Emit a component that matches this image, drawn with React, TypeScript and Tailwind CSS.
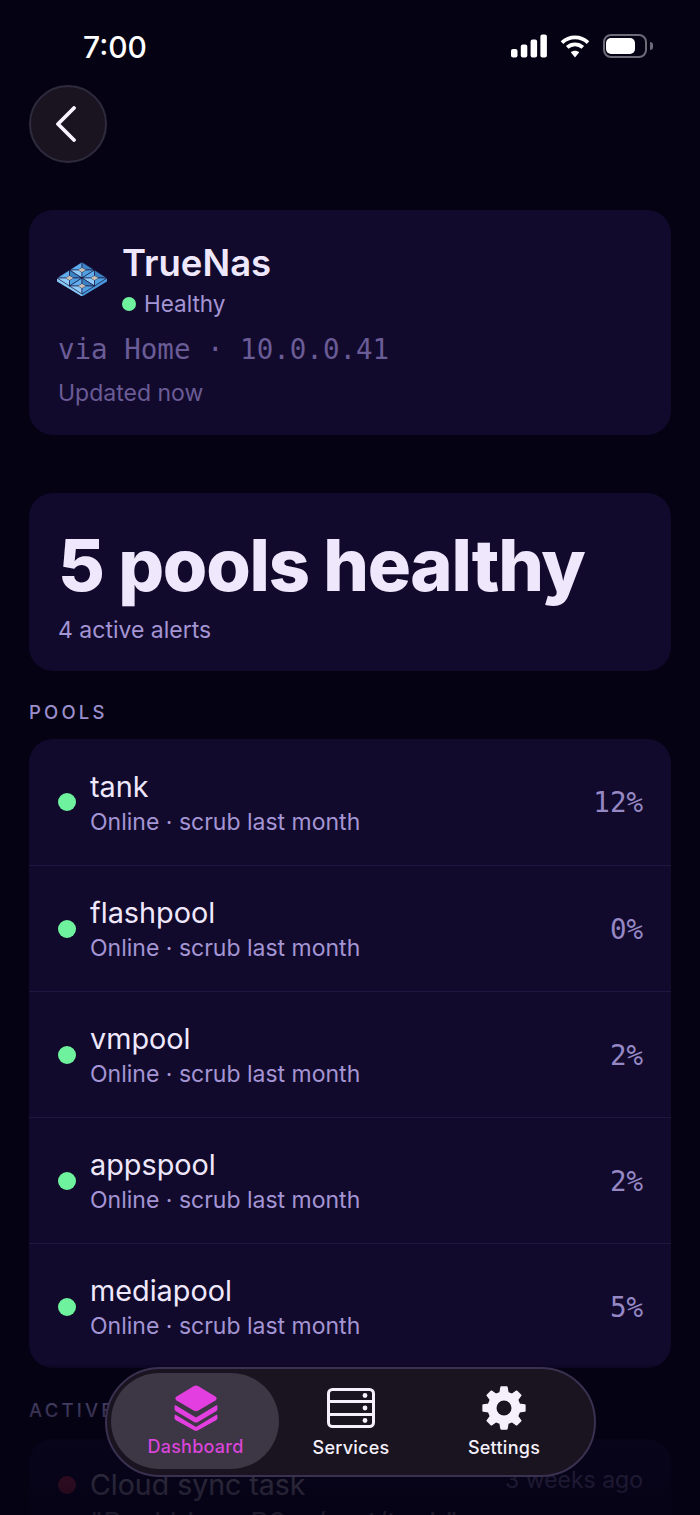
import { Fragment } from "react";

const POOLS = [
  { name: "tank", usage: "12%" },
  { name: "flashpool", usage: "0%" },
  { name: "vmpool", usage: "2%" },
  { name: "appspool", usage: "2%" },
  { name: "mediapool", usage: "5%" },
];

const MONO = "font-['DejaVu_Sans_Mono',monospace]";

function gearPath(cx: number, cy: number, outer: number, inner: number, teeth: number): string {
  const pts: string[] = [];
  const step = (Math.PI * 2) / teeth;
  for (let i = 0; i < teeth; i++) {
    const a = i * step - Math.PI / 2;
    const spots: [number, number][] = [
      [a - step * 0.3, inner],
      [a - step * 0.17, outer],
      [a + step * 0.17, outer],
      [a + step * 0.3, inner],
    ];
    spots.forEach(([t, r]) => pts.push(`${(cx + Math.cos(t) * r).toFixed(2)} ${(cy + Math.sin(t) * r).toFixed(2)}`));
  }
  return `M${pts.join("L")}Z`;
}

function StatusIcons() {
  return (
    <div className="flex items-center gap-[13px]">
      <svg width="36" height="24" viewBox="0 0 36 24" fill="#fff">
        <rect x="0" y="15" width="6.5" height="8.5" rx="2" />
        <rect x="9.8" y="10.5" width="6.5" height="13" rx="2" />
        <rect x="19.6" y="5.5" width="6.5" height="18" rx="2" />
        <rect x="29.4" y="0.5" width="6.5" height="23" rx="2" />
      </svg>
      <svg width="30" height="24" viewBox="0 0 30 24" fill="none" stroke="#fff" strokeWidth="3.8">
        <path d="M2 8.6C9.4 1.7 20.6 1.7 28 8.6" />
        <path d="M7.2 13.4C11.8 9.4 18.2 9.4 22.8 13.4" />
        <path d="M15 23.4L10.8 18.2C13.2 16.2 16.8 16.2 19.2 18.2Z" fill="#fff" stroke="none" />
      </svg>
      <div className="flex items-center gap-[3px]">
        <div className="flex h-[24px] w-[44px] items-center rounded-[8px] border-2 border-[#6f6a78] p-[1px]">
          <div className="h-[16px] w-[29px] rounded-[5px] bg-white" />
        </div>
        <div className="h-[8px] w-[3px] rounded-r-full bg-[#6f6a78]" />
      </div>
    </div>
  );
}

function NasLogo() {
  // 2x2 isometric tile grid, each tile is a gray core with four blue bricks
  const cells = [
    [26, 10],
    [13.5, 18],
    [38.5, 18],
    [26, 26],
  ];
  const hw = 12.5;
  const hh = 8;
  const iw = 3.8;
  const ih = 2.2;
  return (
    <svg width="52" height="36" viewBox="0 0 52 36" className="ml-[-2px] mt-[19px] shrink-0">
      <path d="M1 18L26 34V36.5L1 21.6Z" fill="#86c6f7" />
      <path d="M51 18L26 34V36.5L51 21.6Z" fill="#4a98dd" />
      {cells.map(([x, y]) => (
        <Fragment key={`${x}-${y}`}>
          <g stroke="#120a2c" strokeWidth="0.55">
            <path d={`M${x - hw} ${y}L${x} ${y - hh}L${x} ${y - ih}L${x - iw} ${y}Z`} fill="#5fadec" />
            <path d={`M${x + hw} ${y}L${x} ${y - hh}L${x} ${y - ih}L${x + iw} ${y}Z`} fill="#3b82c4" />
            <path d={`M${x - hw} ${y}L${x} ${y + hh}L${x} ${y + ih}L${x - iw} ${y}Z`} fill="#8fcaf8" />
            <path d={`M${x + hw} ${y}L${x} ${y + hh}L${x} ${y + ih}L${x + iw} ${y}Z`} fill="#4f9fe2" />
          </g>
          <path d={`M${x - iw} ${y}L${x} ${y - ih}L${x + iw} ${y}L${x} ${y + ih}Z`} fill="#c4c0b8" />
        </Fragment>
      ))}
    </svg>
  );
}

function TabBar() {
  const label = "text-[18px] font-medium leading-[22px] tracking-[0.25px]";
  return (
    <div className="absolute left-[105px] top-[1367px] flex h-[110px] w-[491px] items-start rounded-[55px] border-2 border-[#3a3050] bg-[#19141f] pl-[4px] pt-[4px]">
      <div className="flex h-[96px] w-[168px] flex-col items-center rounded-[48px] bg-[#3d3645] pl-[1px] pt-[12px]">
        <svg width="44" height="46" viewBox="0 0 44 46" fill="#e33fe0">
          <path d="M19.6 1.2C21 0.4 23 0.4 24.4 1.2L41.4 11.6C43.2 12.8 43.2 14.2 41.4 15.4L24.4 25.6C23 26.4 21 26.4 19.6 25.6L2.6 15.4C0.8 14.2 0.8 12.8 2.6 11.6Z" />
          <path d="M2 20.5L22 32.6L42 20.5C43 20 43.4 20.6 43.4 21.6V24C43.4 25 43 25.6 42 26.2L24 37C22.6 37.8 21.4 37.8 20 37L2 26.2C1 25.6 0.6 25 0.6 24V21.6C0.6 20.6 1 20 2 20.5Z" />
          <path d="M2 30L22 42L42 30C43 29.5 43.4 30 43.4 31V33C43.4 34 43 34.6 42 35.2L24 45.2C22.6 46 21.4 46 20 45.2L2 35.2C1 34.6 0.6 34 0.6 33V31C0.6 30 1 29.5 2 30Z" />
        </svg>
        <span className={`mt-[5px] ${label} text-[#d945d8]`}>Dashboard</span>
      </div>
      <div className="ml-[15px] flex w-[114px] flex-col items-center pt-[15px]">
        <svg width="48" height="40" viewBox="0 0 48 40" fill="none">
          <rect x="1.5" y="1.5" width="45" height="37" rx="4" stroke="#f5f0fb" strokeWidth="3" />
          <path d="M1.5 13.5H46.5M1.5 26.5H46.5" stroke="#f5f0fb" strokeWidth="3" />
          <circle cx="38" cy="7.5" r="2.4" fill="#f5f0fb" />
          <circle cx="38" cy="20" r="2.4" fill="#f5f0fb" />
          <circle cx="38" cy="32.5" r="2.4" fill="#f5f0fb" />
        </svg>
        <span className={`mt-[9px] ${label} text-[#f5f0fb]`}>Services</span>
      </div>
      <div className="ml-[39px] flex w-[114px] flex-col items-center pt-[13px]">
        <svg width="44" height="44" viewBox="0 0 44 44">
          <path d={gearPath(22, 22, 22, 16.5, 8)} fill="#f5f0fb" stroke="#f5f0fb" strokeWidth="2" strokeLinejoin="round" transform="translate(1.1 1.1) scale(0.95)" />
          <circle cx="22" cy="22" r="7.5" fill="#19141f" />
        </svg>
        <span className={`mt-[7px] ${label} text-[#f5f0fb]`}>Settings</span>
      </div>
    </div>
  );
}

export default function App() {
  return (
    <div className="relative h-[1515px] w-[700px] overflow-hidden bg-[#050214] font-['Inter',sans-serif]">
      <div className="flex h-[85px] items-start justify-between pl-[83px] pr-[47px] pt-[27px]">
        <span className="text-[30px] font-medium leading-[40px] text-white">7:00</span>
        <div className="pt-[7px]">
          <StatusIcons />
        </div>
      </div>

      <div className="px-[29px]">
        <button className="flex h-[78px] w-[78px] items-center justify-center rounded-full border-2 border-[#2f2a3d] bg-[#19141f]">
          <svg width="24" height="36" viewBox="0 0 24 36" fill="none" stroke="#f8f4ff" strokeWidth="3.8" strokeLinecap="round" strokeLinejoin="round" className="ml-[-4px]">
            <path d="M20 2L4 18L20 34" />
          </svg>
        </button>

        <section className="mt-[47px] h-[225px] rounded-[24px] bg-[#120a2c] px-[29px] pt-[31px]">
          <div className="flex items-start gap-[14px]">
            <NasLogo />
            <div>
              <h1 className="text-[36.5px] font-semibold leading-[44px] text-[#efe8fd]">TrueNas</h1>
              <div className="mt-[4px] flex items-center gap-[8px]">
                <span className="h-[14px] w-[14px] rounded-full bg-[#6ff29d]" />
                <span className="text-[22.5px] leading-[30px] text-[#a495d4]">Healthy</span>
              </div>
            </div>
          </div>
          <div className={`mt-[14px] text-[27.5px] leading-[32px] text-[#6a5c96] ${MONO}`}>via Home · 10.0.0.41</div>
          <div className="mt-[14px] text-[23px] leading-[28px] text-[#6a5c96]">Updated now</div>
        </section>

        <section className="mt-[58px] h-[178px] rounded-[24px] bg-[#120a2c] px-[29px] pt-[30px]">
          <h2 className="text-[72px] font-extrabold leading-[84px] tracking-[-1.25px] text-[#efe8fd]">5 pools healthy</h2>
          <p className="mt-[9px] text-[23px] leading-[28px] text-[#a495d4]">4 active alerts</p>
        </section>

        <h3 className="mt-[29px] text-[18.5px] font-medium leading-[24px] tracking-[3.2px] text-[#9a8ecb]">POOLS</h3>

        <section className="mt-[15px] h-[629px] overflow-hidden rounded-[24px] bg-[#120a2c]">
          {POOLS.map((pool, i) => (
            <div key={pool.name} className={`flex h-[126px] items-center pl-[29px] pr-[28px] ${i > 0 ? "border-t border-[#1f1740]" : ""}`}>
              <span className="h-[18px] w-[18px] rounded-full bg-[#6ff29d]" />
              <div className="ml-[14px] mt-[1px] flex-1">
                <div className="text-[28.8px] leading-[36px] text-[#efe8fd]">{pool.name}</div>
                <div className="mt-[2px] text-[23px] leading-[30px] text-[#a495d4]">Online · scrub last month</div>
              </div>
              <span className={`mt-[2px] text-[27.5px] text-[#9588c4] ${MONO}`}>{pool.usage}</span>
            </div>
          ))}
        </section>

        <h3 className="mt-[30px] text-[18.5px] font-medium leading-[24px] tracking-[3.2px] text-[#9a8ecb]">ACTIVE ALERTS</h3>

        <section className="mt-[17px] h-[200px] rounded-[24px] bg-[#120a2c] pl-[29px] pr-[28px] pt-[28px]">
          <div className="flex items-center">
            <span className="h-[18px] w-[18px] rounded-full bg-[#ff3b5c]" />
            <div className="ml-[14px] flex-1 text-[28.5px] leading-[36px] text-[#efe8fd]">Cloud sync task</div>
            <span className="mt-[-10px] text-[23px] text-[#a495d4]">3 weeks ago</span>
          </div>
          <div className="ml-[32px] mt-[2px] text-[28.5px] leading-[36px] text-[#efe8fd]">"Backblaze B2 - /mnt/tank"</div>
        </section>
      </div>

      <div className="pointer-events-none absolute inset-x-0 bottom-0 h-[150px] bg-gradient-to-b from-[#050214]/30 via-[#050214]/75 via-40% to-[#050214]/90" />
      <TabBar />
    </div>
  );
}
